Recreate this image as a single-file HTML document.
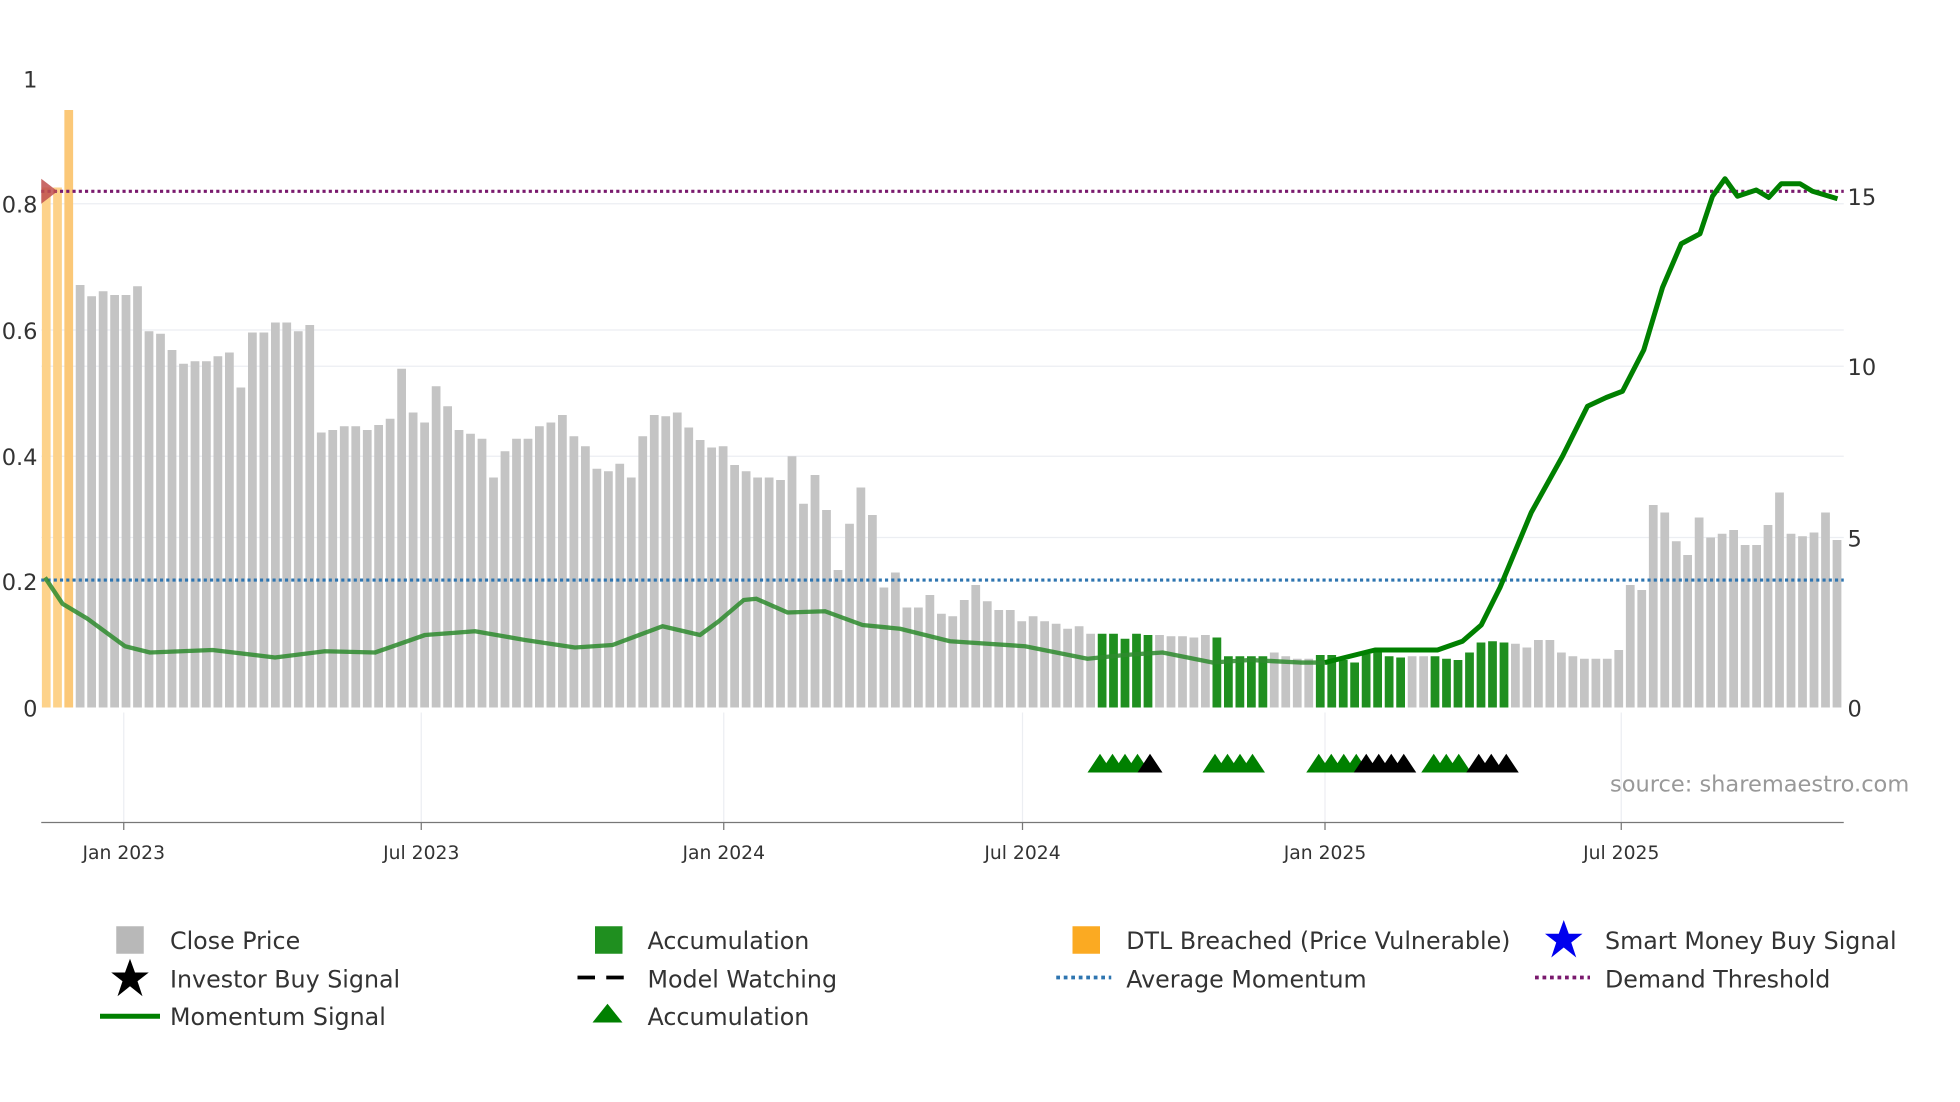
<!DOCTYPE html>
<html><head><meta charset="utf-8"><style>
html,body{margin:0;padding:0;background:#fff;width:1960px;height:1102px;overflow:hidden}
svg{display:block}
text{font-family:"DejaVu Sans","Liberation Sans",sans-serif;fill:#333}
</style></head><body>
<svg id="s" width="1960" height="1102" viewBox="0 0 1568 881.6" xmlns="http://www.w3.org/2000/svg">
<g stroke="#eceef2" stroke-width="1">
<line x1="33" x2="1475" y1="163" y2="163"/><line x1="33" x2="1475" y1="264" y2="264"/>
<line x1="33" x2="1475" y1="293" y2="293"/><line x1="33" x2="1475" y1="365" y2="365"/>
<line x1="33" x2="1475" y1="430" y2="430"/>
<line x1="99" x2="99" y1="570" y2="658"/><line x1="337" x2="337" y1="570" y2="658"/>
<line x1="579" x2="579" y1="570" y2="658"/><line x1="818" x2="818" y1="570" y2="658"/>
<line x1="1060" x2="1060" y1="570" y2="658"/><line x1="1297" x2="1297" y1="570" y2="658"/>
</g>
<g id="bars"></g>
<line x1="33" x2="1475" y1="464" y2="464" stroke="#2e75b0" stroke-width="2.5" stroke-dasharray="2.5,2.5"/>
<line x1="33" x2="1475" y1="153" y2="153" stroke="#7a1a6e" stroke-width="2.5" stroke-dasharray="2.5,2.5"/>
<path d="M36,462 L50,483 L70,495 L100,517 L120,522 L170,520 L220,526 L260,521 L300,522 L340,508 L380,505 L420,512 L460,518 L490,516 L530,501 L560,508 L575,497 L595,480 L605,479 L630,490 L660,489 L690,500 L720,503 L760,513 L820,517 L870,527 L900,524 L930,522 L970,530 L1000,528 L1040,530 L1062,530" fill="none" stroke="#2e8b2e" stroke-opacity="0.85" stroke-width="3.5" stroke-linejoin="round"/>
<path d="M1060,530 L1100,520 L1150,520 L1170,513 L1185,500 L1200,470 L1225,410 L1250,365 L1270,325 L1285,318 L1298,313 L1315,280 L1330,230 L1345,195 L1360,187 L1370,157 L1380,143 L1390,157 L1405,152 L1415,158 L1425,147 L1440,147 L1450,153 L1470,159" fill="none" stroke="#008000" stroke-width="4" stroke-linejoin="round"/>
<path d="M33,143 L46,153 L33,163 Z" fill="#c0504d" opacity="0.85"/>
<g id="tri"></g>
<line x1="33" x2="1475" y1="658" y2="658" stroke="#777" stroke-width="1"/>
<g stroke="#777"><line x1="99" x2="99" y1="658" y2="664"/><line x1="337" x2="337" y1="658" y2="664"/><line x1="579" x2="579" y1="658" y2="664"/><line x1="818" x2="818" y1="658" y2="664"/><line x1="1060" x2="1060" y1="658" y2="664"/><line x1="1297" x2="1297" y1="658" y2="664"/></g>
<g font-size="15" text-anchor="middle"><text x="99" y="687">Jan 2023</text><text x="337" y="687">Jul 2023</text><text x="579" y="687">Jan 2024</text><text x="818" y="687">Jul 2024</text><text x="1060" y="687">Jan 2025</text><text x="1297" y="687">Jul 2025</text></g>
<g font-size="18" text-anchor="end"><text x="30" y="70">1</text><text x="30" y="170">0.8</text><text x="30" y="271">0.6</text><text x="30" y="372">0.4</text><text x="30" y="472">0.2</text><text x="30" y="573">0</text></g>
<g font-size="18"><text x="1478" y="164">15</text><text x="1478" y="300">10</text><text x="1478" y="437">5</text><text x="1478" y="573">0</text></g>
<text x="1288" y="633" font-size="18" style="fill:#999">source: sharemaestro.com</text>
<g font-size="19">
<rect x="93" y="741" width="22" height="22" fill="#b8b8b8"/><text x="136" y="759">Close Price</text>
<path d="M104,767 L108,778 L119,778 L110,785 L114,797 L104,789 L94,797 L98,785 L89,778 L100,778Z" fill="#000"/><text x="136" y="790">Investor Buy Signal</text>
<line x1="80" x2="128" y1="813" y2="813" stroke="#008000" stroke-width="4"/><text x="136" y="820">Momentum Signal</text>
<rect x="476" y="741" width="22" height="22" fill="#1f8f1f"/><text x="518" y="759">Accumulation</text>
<line x1="462" x2="506" y1="782" y2="782" stroke="#000" stroke-width="3" stroke-dasharray="14,9"/><text x="518" y="790">Model Watching</text>
<path d="M486,803 L498,818 L474,818Z" fill="#008000"/><text x="518" y="820">Accumulation</text>
<rect x="858" y="741" width="22" height="22" fill="#fbaa22"/><text x="901" y="759">DTL Breached (Price Vulnerable)</text>
<line x1="845" x2="889" y1="782" y2="782" stroke="#2e75b0" stroke-width="3" stroke-dasharray="3,3"/><text x="901" y="790">Average Momentum</text>
<path d="M1251,736 L1255,747 L1266,747 L1257,754 L1261,766 L1251,758 L1241,766 L1245,754 L1236,747 L1247,747Z" fill="#0000ee"/><text x="1284" y="759">Smart Money Buy Signal</text>
<line x1="1228" x2="1272" y1="782" y2="782" stroke="#7a1a6e" stroke-width="3" stroke-dasharray="3,3"/><text x="1284" y="790">Demand Threshold</text>
</g>
</svg>
<script>
var tops=[150,150,88,228,237,233,236,236,229,265,267,280,291,289,289,285,282,310,266,266,258,258,265,260,346,344,341,341,344,340,335,295,330,338,309,325,344,347,351,382,361,351,351,341,338,332,349,357,375,377,371,382,349,332,333,330,342,352,358,357,372,377,382,382,384,365,403,380,408,456,419,390,412,470,458,486,486,476,491,493,480,468,481,488,488,497,493,497,499,503,501,507,507,507,511,507,508,508,509,509,510,508,510,525,525,525,525,522,525,527,527,524,524,528,530,523,520,525,526,525,525,525,527,528,522,514,513,514,515,518,512,512,522,525,527,527,527,520,468,472,404,410,433,444,414,430,427,424,436,436,420,394,427,429,426,410,432];
var green=function(i){return (i>=92&&i<=96)||(i>=102&&i<=106)||(i>=111&&i<=118)||(i>=121&&i<=127);};
var h='';
for(var i=0;i<tops.length;i++){
 var x=i<3?(33.5+9*i):(64.1+9.186*(i-3)-3.5);
 var c=i<2?'#fdd28a':(i==2?'#fbc878':(green(i)?'#1f8f1f':'#c4c4c4'));
 h+='<rect x="'+x.toFixed(1)+'" y="'+tops[i]+'" width="7" height="'+(566-tops[i])+'" fill="'+c+'"/>';
}
document.getElementById('bars').innerHTML=h;
var t='';
function tri(x,c){t+='<path d="M'+x+',603 L'+(x+10)+',618 L'+(x-10)+',618Z" fill="'+c+'"/>';}
[880,890,900,910].forEach(function(x){tri(x,'#008000')});tri(920,'#000');
[972,982,992,1002].forEach(function(x){tri(x,'#008000')});
[1055,1065,1075,1085].forEach(function(x){tri(x,'#008000')});
[1093,1103,1113,1123].forEach(function(x){tri(x,'#000')});
[1147,1157,1167].forEach(function(x){tri(x,'#008000')});
[1183,1193,1205].forEach(function(x){tri(x,'#000')});
document.getElementById('tri').innerHTML=t;
</script>
</body></html>
